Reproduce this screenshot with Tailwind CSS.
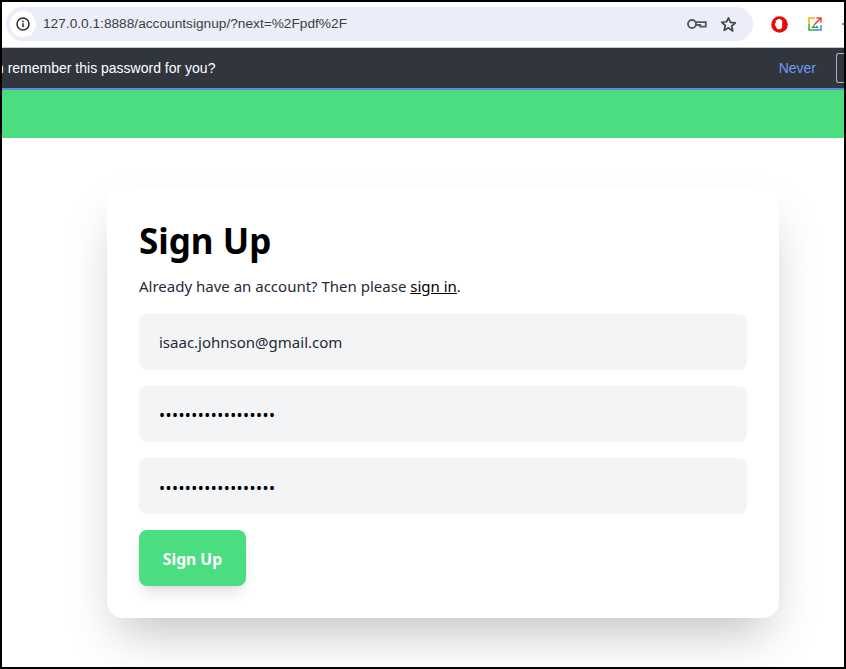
<!DOCTYPE html>
<html lang="en">
<head>
<meta charset="utf-8">
<title>Sign Up</title>
<script src="https://cdn.jsdelivr.net/npm/@tailwindcss/browser@4"></script>
</head>
<body class="bg-white">
<div class="w-[846px] h-[669px] border-2 border-black overflow-hidden flex flex-col font-['Noto_Sans',sans-serif]">
  <!-- browser toolbar -->
  <div class="h-[46px] shrink-0 flex items-center pb-px bg-white border-b border-[#c4c7cc]">
    <div class="ml-1 w-[747px] h-[34px] shrink-0 rounded-full bg-[#ebeef8] flex items-center pl-[4px] pr-4">
      <div class="w-[26px] h-[26px] rounded-full bg-white flex items-center justify-center">
        <svg width="16" height="16" viewBox="0 0 16 16" fill="none" stroke="#2b2b2b" stroke-width="1.5">
          <circle cx="8" cy="8" r="6" />
          <path d="M8 7.2v4M8 4.600v1.600" />
        </svg>
      </div>
      <span class="ml-[7px] text-[13.7px] text-[#3c4043] font-['Liberation_Sans',sans-serif]">127.0.0.1:8888/accountsignup/?next=%2Fpdf%2F</span>
      <svg class="ml-auto" width="20" height="12" viewBox="0 0 20 12" fill="none" stroke="#555" stroke-width="1.800">
        <circle cx="5" cy="6" r="4" />
        <path d="M9 4.200h9.800v4.400h-5.600v-1.600h-4" />
      </svg>
      <svg class="ml-[13px]" width="17" height="17" viewBox="0 0 24 24" fill="none" stroke="#444746" stroke-width="2.400" stroke-linejoin="round">
        <path d="M12 2.800l2.800 6.300 6.900.7-5.200 4.600 1.500 6.800L12 16.700l-6 3.500 1.500-6.800-5.200-4.600 6.900-.7z" />
      </svg>
    </div>
    <svg class="ml-[18px] shrink-0" width="17" height="17" viewBox="0 0 17 17">
      <circle cx="8.500" cy="8.500" r="8.300" fill="#e60b0b" />
      <path d="M4.800 8.200v-3.400a.8 .8 0 0 1 1.600 0v-1a.8 .8 0 0 1 1.600 0v-.3a.8 .8 0 0 1 1.600 0v1.300a.8 .8 0 0 1 1.600 0v5.400c0 2-1.200 3-3.200 3-1.500 0-2.400-.9-3-2.300l-1.200-2.500c-.4-.9.800-1.500 1.300-.7z" fill="#fff" />
    </svg>
    <svg class="ml-[20px] shrink-0" width="14" height="14" viewBox="0 0 14 14" fill="none">
      <path d="M7 1H1v6" stroke="#f4b400" stroke-width="1.500" />
      <path d="M1 7v6h6" stroke="#34a853" stroke-width="1.500" />
      <path d="M7 13h6V8" stroke="#4285f4" stroke-width="1.500" />
      <path d="M6 8l6.500-6.500M8.500 1H13v4.500" stroke="#ea4335" stroke-width="1.500" />
      <path d="M3 11l2.500-3 2 2 1.500-1.500 2 2.500z" fill="#34a853" />
    </svg>
    <div class="ml-[20px] w-[2px] h-[2px] shrink-0 rounded-full bg-[#666]"></div>
  </div>

  <!-- save password bar -->
  <div class="h-[40px] shrink-0 bg-[#31353e] flex items-center overflow-hidden font-['Liberation_Sans',sans-serif] text-[14px]">
    <span class="ml-[-6px] text-white whitespace-nowrap">n remember this password for you?</span>
    <span class="ml-auto text-[#6e9bf5]">Never</span>
    <div class="ml-5 mr-[-8px] w-4 h-[30px] shrink-0 rounded-l-[3px] border border-r-0 border-[#b0b3b8]"></div>
  </div>
  <div class="h-[2px] shrink-0 bg-[#5b8ad8]"></div>

  <!-- page header -->
  <div class="h-[48px] shrink-0 bg-[#4ade80]"></div>

  <!-- signup card -->
  <div class="flex-1 pt-12 pl-[105px]">
    <div class="w-[672px] h-[432px] bg-white rounded-2xl shadow-2xl p-8">
      <h1 class="text-[35px] leading-[40px] font-bold text-black mt-[3px]">Sign Up</h1>
      <p class="mt-[13px] text-[15px] leading-6 text-[#1f2937]">Already have an account? Then please <a href="#" class="underline text-black">sign in</a>.</p>
      <form class="mt-4 flex flex-col gap-4">
        <input type="email" value="isaac.johnson@gmail.com" class="w-full h-14 px-5 rounded-lg bg-[#f3f4f6] text-[15px] text-[#1f2937]" />
        <input type="password" value="isaacjohnson12345!" class="w-full h-14 px-5 pt-[2px] rounded-lg bg-[#f3f4f6] text-[16px] tracking-[0.45px] text-black" />
        <input type="password" value="isaacjohnson12345!" class="w-full h-14 px-5 pt-[3px] rounded-lg bg-[#f3f4f6] text-[16px] tracking-[0.45px] text-black" />
        <button type="button" class="w-[107px] h-14 pt-[3px] rounded-lg bg-[#4ade80] text-white text-[15.7px] font-bold shadow-lg">Sign Up</button>
      </form>
    </div>
  </div>
</div>
</body>
</html>
